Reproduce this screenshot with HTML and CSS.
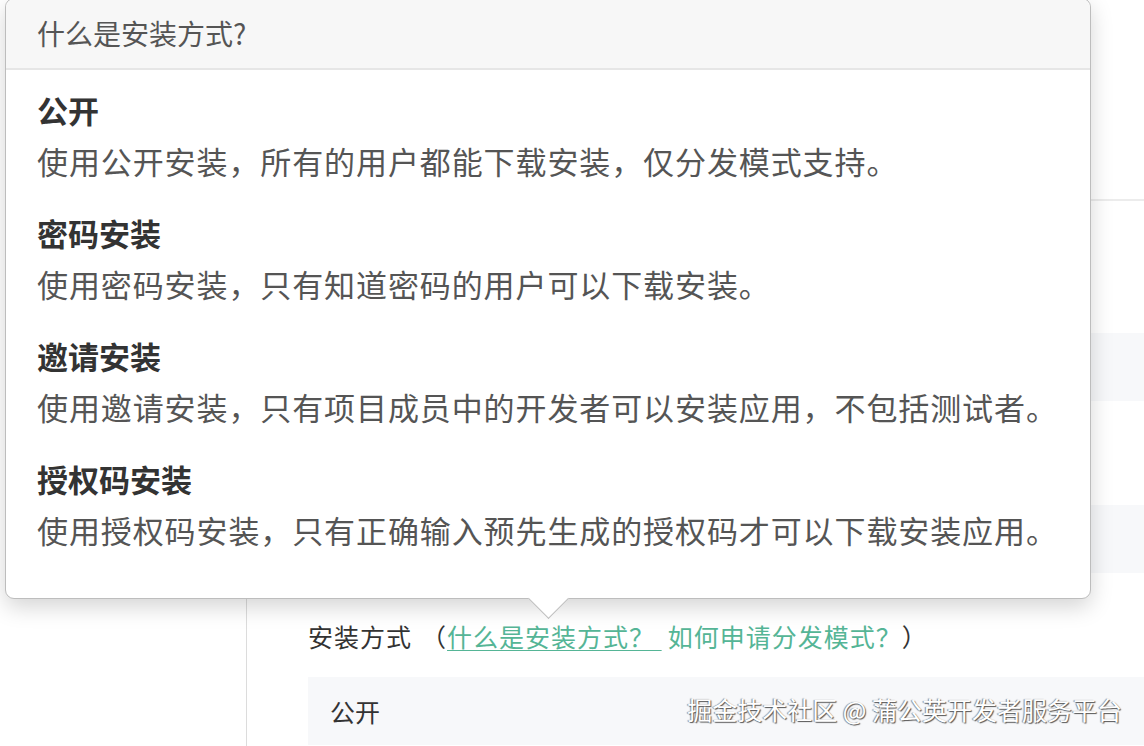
FILE: index.html
```html
<!DOCTYPE html>
<html lang="zh-CN">
<head>
    <meta charset="UTF-8">
    <meta name="viewport" content="width=device-width, initial-scale=1.0">
    <title>发布应用</title>
    <link rel="stylesheet" href="styles.css">
</head>
<body>
    <div class="page">
        <div class="sidebar"></div>

        <div class="main">
            <div class="top-section"></div>

            <!-- these two rows sit under the popover -->
            <div class="field field-first">
                <div class="field-label"></div>
                <div class="field-input"></div>
            </div>
            <div class="field">
                <div class="field-label"></div>
                <div class="field-input"></div>
            </div>
            <div class="field">
                <div class="field-label">
                    安装方式<span class="paren open">（</span><a class="link underline" href="#">什么是安装方式？&nbsp;</a><a class="link second" href="#">如何申请分发模式？</a><span class="paren">）</span>
                </div>
                <div class="field-input">公开</div>
            </div>
        </div>

        <div class="popover">
            <div class="popover-header">什么是安装方式?</div>
            <div class="popover-body">
                <div class="item">
                    <div class="item-title">公开</div>
                    <div class="item-desc">使用公开安装，所有的用户都能下载安装，仅分发模式支持。</div>
                </div>
                <div class="item">
                    <div class="item-title">密码安装</div>
                    <div class="item-desc">使用密码安装，只有知道密码的用户可以下载安装。</div>
                </div>
                <div class="item">
                    <div class="item-title">邀请安装</div>
                    <div class="item-desc">使用邀请安装，只有项目成员中的开发者可以安装应用，不包括测试者。</div>
                </div>
                <div class="item">
                    <div class="item-title">授权码安装</div>
                    <div class="item-desc">使用授权码安装，只有正确输入预先生成的授权码才可以下载安装应用。</div>
                </div>
            </div>
            <div class="arrow"></div>
        </div>

        <div class="watermark">掘金技术社区 @ 蒲公英开发者服务平台</div>
    </div>
</body>
</html>
```

FILE: styles.css
```css
body {
    margin: 0;
    padding: 0;
    font-family: "Noto Sans CJK SC", "Noto Sans", sans-serif;
    background: #fff;
    color: #333;
}

.page {
    position: relative;
    display: flex;
    width: 1144px;
    height: 746px;
    overflow: hidden;
}

.sidebar {
    width: 246px;
    flex-shrink: 0;
    border-right: 1px solid #dcdcdc;
}

.main {
    flex: 1;
    padding-left: 61px;
}

.top-section {
    height: 199px;
    margin-left: -61px;
    border-bottom: 2px solid #ececec;
}

.field {
    padding-top: 48px;
}

.field-first {
    padding-top: 76px;
}

.field-label {
    font-size: 25px;
    line-height: 30px;
    height: 30px;
    color: #333;
    letter-spacing: 1px;
    white-space: nowrap;
}

.paren {
    color: #333;
}

.paren.open {
    margin-left: 9px;
}

.link {
    color: #55b596;
    text-decoration: none;
}

.link.underline {
    text-decoration: underline;
    text-underline-offset: 3px;
    text-decoration-thickness: 1px;
}

.link.second {
    margin-left: 6px;
}

.field-input {
    margin-top: 26px;
    height: 68px;
    line-height: 68px;
    padding-left: 22px;
    background: #f7f8fa;
    font-size: 25px;
    color: #333;
}

.popover {
    position: absolute;
    left: 5px;
    top: -2px;
    width: 1084px;
    background: #fff;
    border: 1px solid #bdbdbd;
    border-radius: 9px;
    box-shadow: 0 8px 22px rgba(0, 0, 0, 0.17);
}

.popover-header {
    height: 69px;
    line-height: 68px;
    padding-left: 31px;
    background: #f7f7f7;
    border-bottom: 2px solid #e6e6e6;
    border-radius: 9px 9px 0 0;
    font-size: 28px;
    color: #555;
}

.popover-body {
    padding: 14px 31px 22px;
}

.item {
    margin-bottom: 21px;
}

.item-title {
    font-size: 31px;
    line-height: 51px;
    font-weight: 700;
    color: #333;
}

.item-desc {
    font-size: 31px;
    line-height: 51px;
    color: #555;
    letter-spacing: 0.9px;
    white-space: nowrap;
}

.arrow {
    position: absolute;
    left: 528px;
    bottom: -15px;
    width: 28px;
    height: 28px;
    background: #fff;
    border-right: 1px solid #bdbdbd;
    border-bottom: 1px solid #bdbdbd;
    transform: rotate(45deg);
}

.watermark {
    position: absolute;
    right: 22px;
    bottom: 19px;
    font-size: 25px;
    color: #fff;
    text-shadow: 1px 1px 1px #555, -1px 0 1px #888;
    white-space: nowrap;
}
```
